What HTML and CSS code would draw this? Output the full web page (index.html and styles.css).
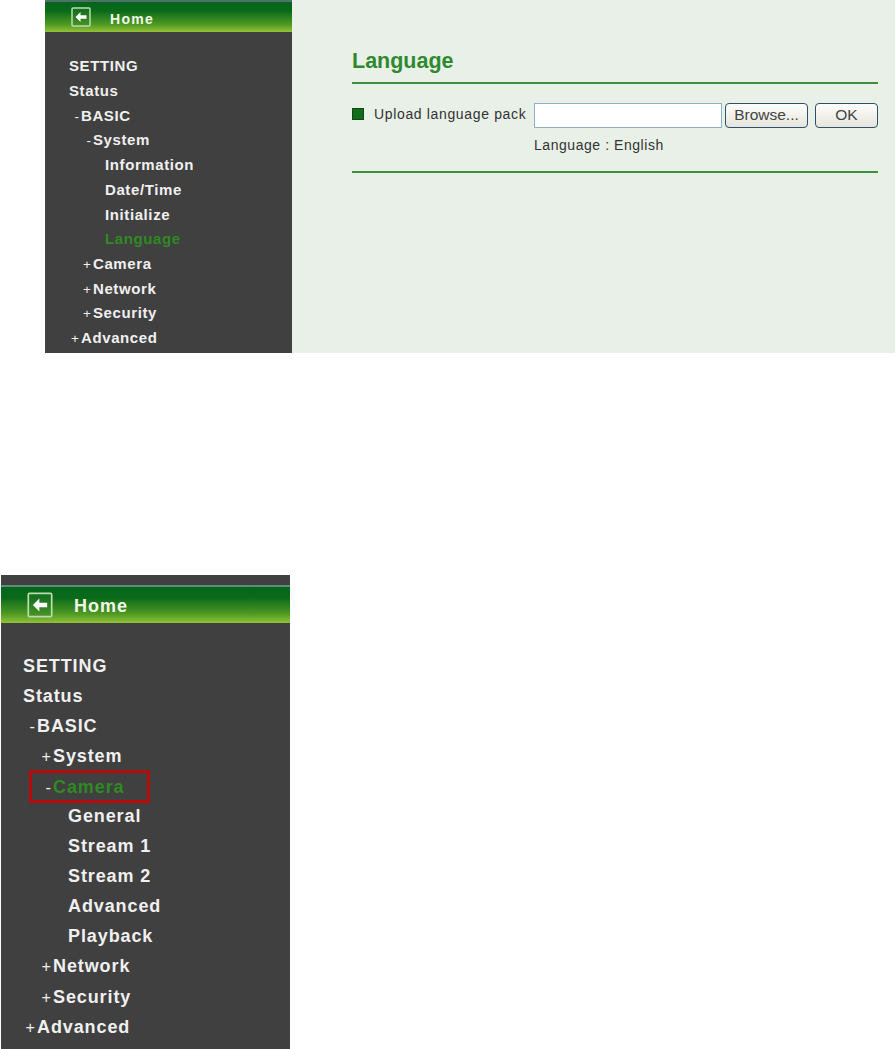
FILE: index.html
```html
<!DOCTYPE html>
<html lang="en">
<head>
    <meta charset="UTF-8">
    <title>Language</title>
    <link rel="stylesheet" href="styles.css">
</head>
<body>
    <div class="shot shot-top">
        <div class="menu">
            <div class="menu-cap"></div>
            <div class="home">
                <svg class="back" viewBox="0 0 20 20"><rect x="1" y="1" width="18" height="18" rx="1" fill="#2f7f2a" fill-opacity=".35" stroke="#bcdcae" stroke-width="1.5"/><path d="M4.5 10 9.5 5V8.3H15.5V11.7H9.5V15Z" fill="#fff"/></svg>
                <span>Home</span>
            </div>
            <ul class="tree">
                <li>SETTING</li>
                <li>Status</li>
                <li class="lvl1"><i>-</i>BASIC</li>
                <li class="lvl2"><i>-</i>System</li>
                <li class="lvl3">Information</li>
                <li class="lvl3">Date/Time</li>
                <li class="lvl3">Initialize</li>
                <li class="lvl3 current">Language</li>
                <li class="lvl2"><i>+</i>Camera</li>
                <li class="lvl2"><i>+</i>Network</li>
                <li class="lvl2"><i>+</i>Security</li>
                <li class="lvl1"><i>+</i>Advanced</li>
            </ul>
        </div>
        <div class="content">
            <h1>Language</h1>
            <div class="upload-row">
                <span class="bullet"></span>
                <label for="pack">Upload language pack</label>
                <input type="text" id="pack">
                <button class="browse">Browse...</button>
                <button class="ok">OK</button>
            </div>
            <p class="current-lang">Language : English</p>
        </div>
    </div>

    <div class="shot shot-bottom">
        <div class="menu">
            <div class="menu-cap"></div>
            <div class="home">
                <svg class="back" viewBox="0 0 20 20"><rect x="1" y="1" width="18" height="18" rx="1" fill="#2f7f2a" fill-opacity=".35" stroke="#bcdcae" stroke-width="1.3"/><path d="M4.5 10 9.5 5V8.3H15.5V11.7H9.5V15Z" fill="#fff"/></svg>
                <span>Home</span>
            </div>
            <ul class="tree">
                <li>SETTING</li>
                <li>Status</li>
                <li class="lvl1"><i>-</i>BASIC</li>
                <li class="lvl2"><i>+</i>System</li>
                <li class="lvl2 current"><span class="marked"><i>-</i>Camera</span></li>
                <li class="lvl3">General</li>
                <li class="lvl3">Stream 1</li>
                <li class="lvl3">Stream 2</li>
                <li class="lvl3">Advanced</li>
                <li class="lvl3">Playback</li>
                <li class="lvl2"><i>+</i>Network</li>
                <li class="lvl2"><i>+</i>Security</li>
                <li class="lvl1"><i>+</i>Advanced</li>
            </ul>
        </div>
    </div>
</body>
</html>
```

FILE: styles.css
```css
html, body {
    margin: 0;
    padding: 0;
    background: #fff;
}

body {
    width: 896px;
    height: 1049px;
    overflow: hidden;
    font-family: "Liberation Sans", Arial, sans-serif;
}

.shot {
    display: flex;
}

.shot-top {
    margin-left: 45px;
    width: 850px;
    height: 353px;
    background: #e8f0e8;
}

.shot-bottom {
    margin-top: 222px;
    margin-left: 1px;
    width: 289px;
    height: 474px;
}

.menu {
    background: #404040;
    flex-shrink: 0;
    overflow: hidden;
}

.shot-top .menu {
    width: 247px;
}

.shot-bottom .menu {
    width: 289px;
}

.menu-cap {
    height: 2px;
    background: #4f7268;
}

.shot-bottom .menu-cap {
    height: 12px;
    background: linear-gradient(#404040 0, #404040 10px, #5f8a7c 10px);
}

.home {
    display: flex;
    align-items: center;
    height: 30px;
    background: linear-gradient(#04651c 0, #0a6a1a 30%, #4f9a22 75%, #93c236 100%);
    color: #f2f7ea;
    font-weight: bold;
    font-size: 14px;
    letter-spacing: 1.3px;
    padding-left: 26px;
}

.home span {
    padding-top: 3px;
}

.shot-bottom .home {
    height: 36px;
    font-size: 18px;
    letter-spacing: 1px;
    padding-left: 26px;
}

.back {
    width: 20px;
    height: 20px;
    margin-right: 19px;
}

.shot-bottom .back {
    width: 26px;
    height: 26px;
    margin-right: 21px;
}

.tree {
    list-style: none;
    margin: 0;
    padding: 22.4px 0 0 24px;
    color: #f0f0f0;
    font-weight: bold;
    font-size: 15px;
    letter-spacing: 0.6px;
}

.tree li {
    height: 24.7px;
    line-height: 24.7px;
}

.shot-bottom .tree {
    padding: 27.5px 0 0 22px;
    font-size: 18px;
    letter-spacing: 0.9px;
}

.shot-bottom .tree li {
    height: 30.1px;
    line-height: 30.1px;
}

.tree i {
    display: inline-block;
    box-sizing: border-box;
    width: 10px;
    padding-right: 2px;
    font-style: normal;
    font-weight: normal;
    font-size: 0.9em;
    line-height: 1;
    letter-spacing: 0;
    text-align: right;
}

.shot-bottom .tree i {
    width: 12px;
}

.tree .lvl1 {
    padding-left: 2px;
}

.tree .lvl2 {
    padding-left: 14px;
}

.tree .lvl3 {
    padding-left: 36px;
}

.shot-bottom .tree .lvl1 {
    padding-left: 2px;
}

.shot-bottom .tree .lvl2 {
    padding-left: 18px;
}

.shot-bottom .tree .lvl3 {
    padding-left: 45px;
}

.current {
    color: #2f8a22;
}

.current i {
    color: #f0f0f0;
}

.marked {
    display: inline-block;
    box-sizing: border-box;
    width: 121px;
    height: 33px;
    border: 3px solid #b40c0c;
    line-height: 28px;
    margin: -1px 0 0 -12px;
    padding-left: 9px;
    vertical-align: top;
}

/* right side */
.content {
    flex: 1;
    padding: 49px 17px 0 60px;
}

.content h1 {
    margin: 0;
    padding-bottom: 8px;
    border-bottom: 2px solid #3f8f3c;
    color: #2f8a2f;
    font-size: 21.5px;
    line-height: 25px;
}

.upload-row {
    display: flex;
    align-items: center;
    margin-top: 19px;
    font-size: 14px;
    letter-spacing: 0.65px;
    color: #333;
}

.bullet {
    width: 12px;
    height: 12px;
    background: #156b1c;
    border: 1px solid #0c4a12;
    box-sizing: border-box;
    margin: 0 10px 3px 0;
}

.upload-row label {
    width: 160px;
    margin-bottom: 3px;
    white-space: nowrap;
}

.upload-row input {
    width: 188px;
    height: 25px;
    box-sizing: border-box;
    border: 1px solid #8eb0c8;
    background: #fff;
    margin: 0 3px 0 0;
    padding: 0;
}

.upload-row button {
    height: 25px;
    box-sizing: border-box;
    border: 1px solid #2f4f6a;
    border-radius: 4px;
    background: linear-gradient(#fdfdfb, #e6e5dc);
    color: #444;
    font-family: inherit;
    font-size: 15.5px;
    letter-spacing: 0;
    padding: 0 0 2px;
}

.browse {
    width: 83px;
    margin-right: 7px;
}

.ok {
    width: 63px;
}

.current-lang {
    margin: 0;
    padding: 8px 0 17px 182px;
    border-bottom: 2px solid #3f8f3c;
    font-size: 14px;
    letter-spacing: 0.55px;
    line-height: 18px;
    color: #333;
}
```
